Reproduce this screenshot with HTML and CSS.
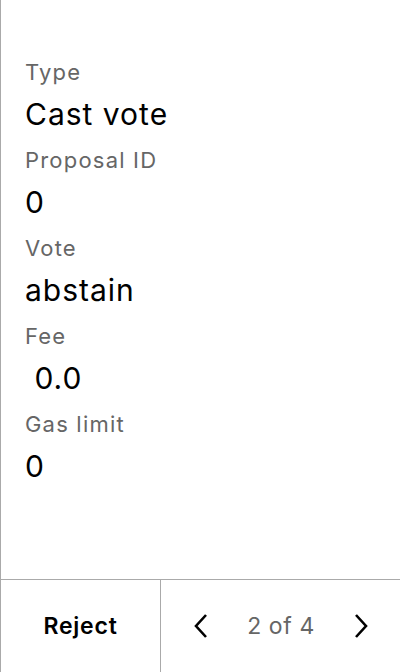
FILE: index.html
```html
<!DOCTYPE html>
<html>
<head>
<meta charset="utf-8">
<link rel="stylesheet" href="styles.css">
</head>
<body>
<div class="screen">
  <div class="details">
    <div class="field">
      <div class="label">Type</div>
      <div class="value">Cast vote</div>
    </div>
    <div class="field">
      <div class="label">Proposal ID</div>
      <div class="value">0</div>
    </div>
    <div class="field">
      <div class="label">Vote</div>
      <div class="value">abstain</div>
    </div>
    <div class="field">
      <div class="label">Fee</div>
      <div class="value">&nbsp;0.0</div>
    </div>
    <div class="field">
      <div class="label">Gas limit</div>
      <div class="value">0</div>
    </div>
  </div>
  <div class="footer">
    <div class="reject">Reject</div>
    <div class="pager">
      <svg class="chev" width="18" height="28" viewBox="0 0 18 28"><path d="M14 3 L4 14 L14 25" fill="none" stroke="#000" stroke-width="2.6" stroke-linejoin="miter"/></svg>
      <span class="count">2 of 4</span>
      <svg class="chev" width="18" height="28" viewBox="0 0 18 28"><path d="M4 3 L14 14 L4 25" fill="none" stroke="#000" stroke-width="2.6" stroke-linejoin="miter"/></svg>
    </div>
  </div>
</div>
</body>
</html>
```
FILE: styles.css
```css
html, body {
  margin: 0;
  padding: 0;
  background: #fff;
}
.screen {
  width: 400px;
  height: 672px;
  box-sizing: border-box;
  border-left: 1px solid #aaaaaa;
  display: flex;
  flex-direction: column;
  font-family: Inter, "Noto Sans", sans-serif;
}
.details {
  flex: 1;
  padding: 58px 0 0 24px;
  display: flex;
  flex-direction: column;
}
.field {
  display: flex;
  flex-direction: column;
  height: 88px;
}
.label {
  font-size: 22px;
  line-height: 28px;
  letter-spacing: 1.2px;
  color: #666666;
}
.value {
  font-size: 30px;
  line-height: 38px;
  letter-spacing: 1px;
  margin-top: 9px;
  color: #000;
}
.footer {
  height: 92px;
  border-top: 1px solid #aaaaaa;
  display: flex;
}
.reject {
  width: 159px;
  border-right: 1px solid #aaaaaa;
  display: flex;
  align-items: center;
  justify-content: center;
  font-size: 23px;
  font-weight: 600;
  letter-spacing: 0.8px;
  color: #000;
}
.pager {
  flex: 1;
  display: flex;
  align-items: center;
  justify-content: space-between;
  padding: 0 30px 0 31px;
}
.count {
  font-size: 23px;
  letter-spacing: 0.6px;
  color: #666666;
}
```
